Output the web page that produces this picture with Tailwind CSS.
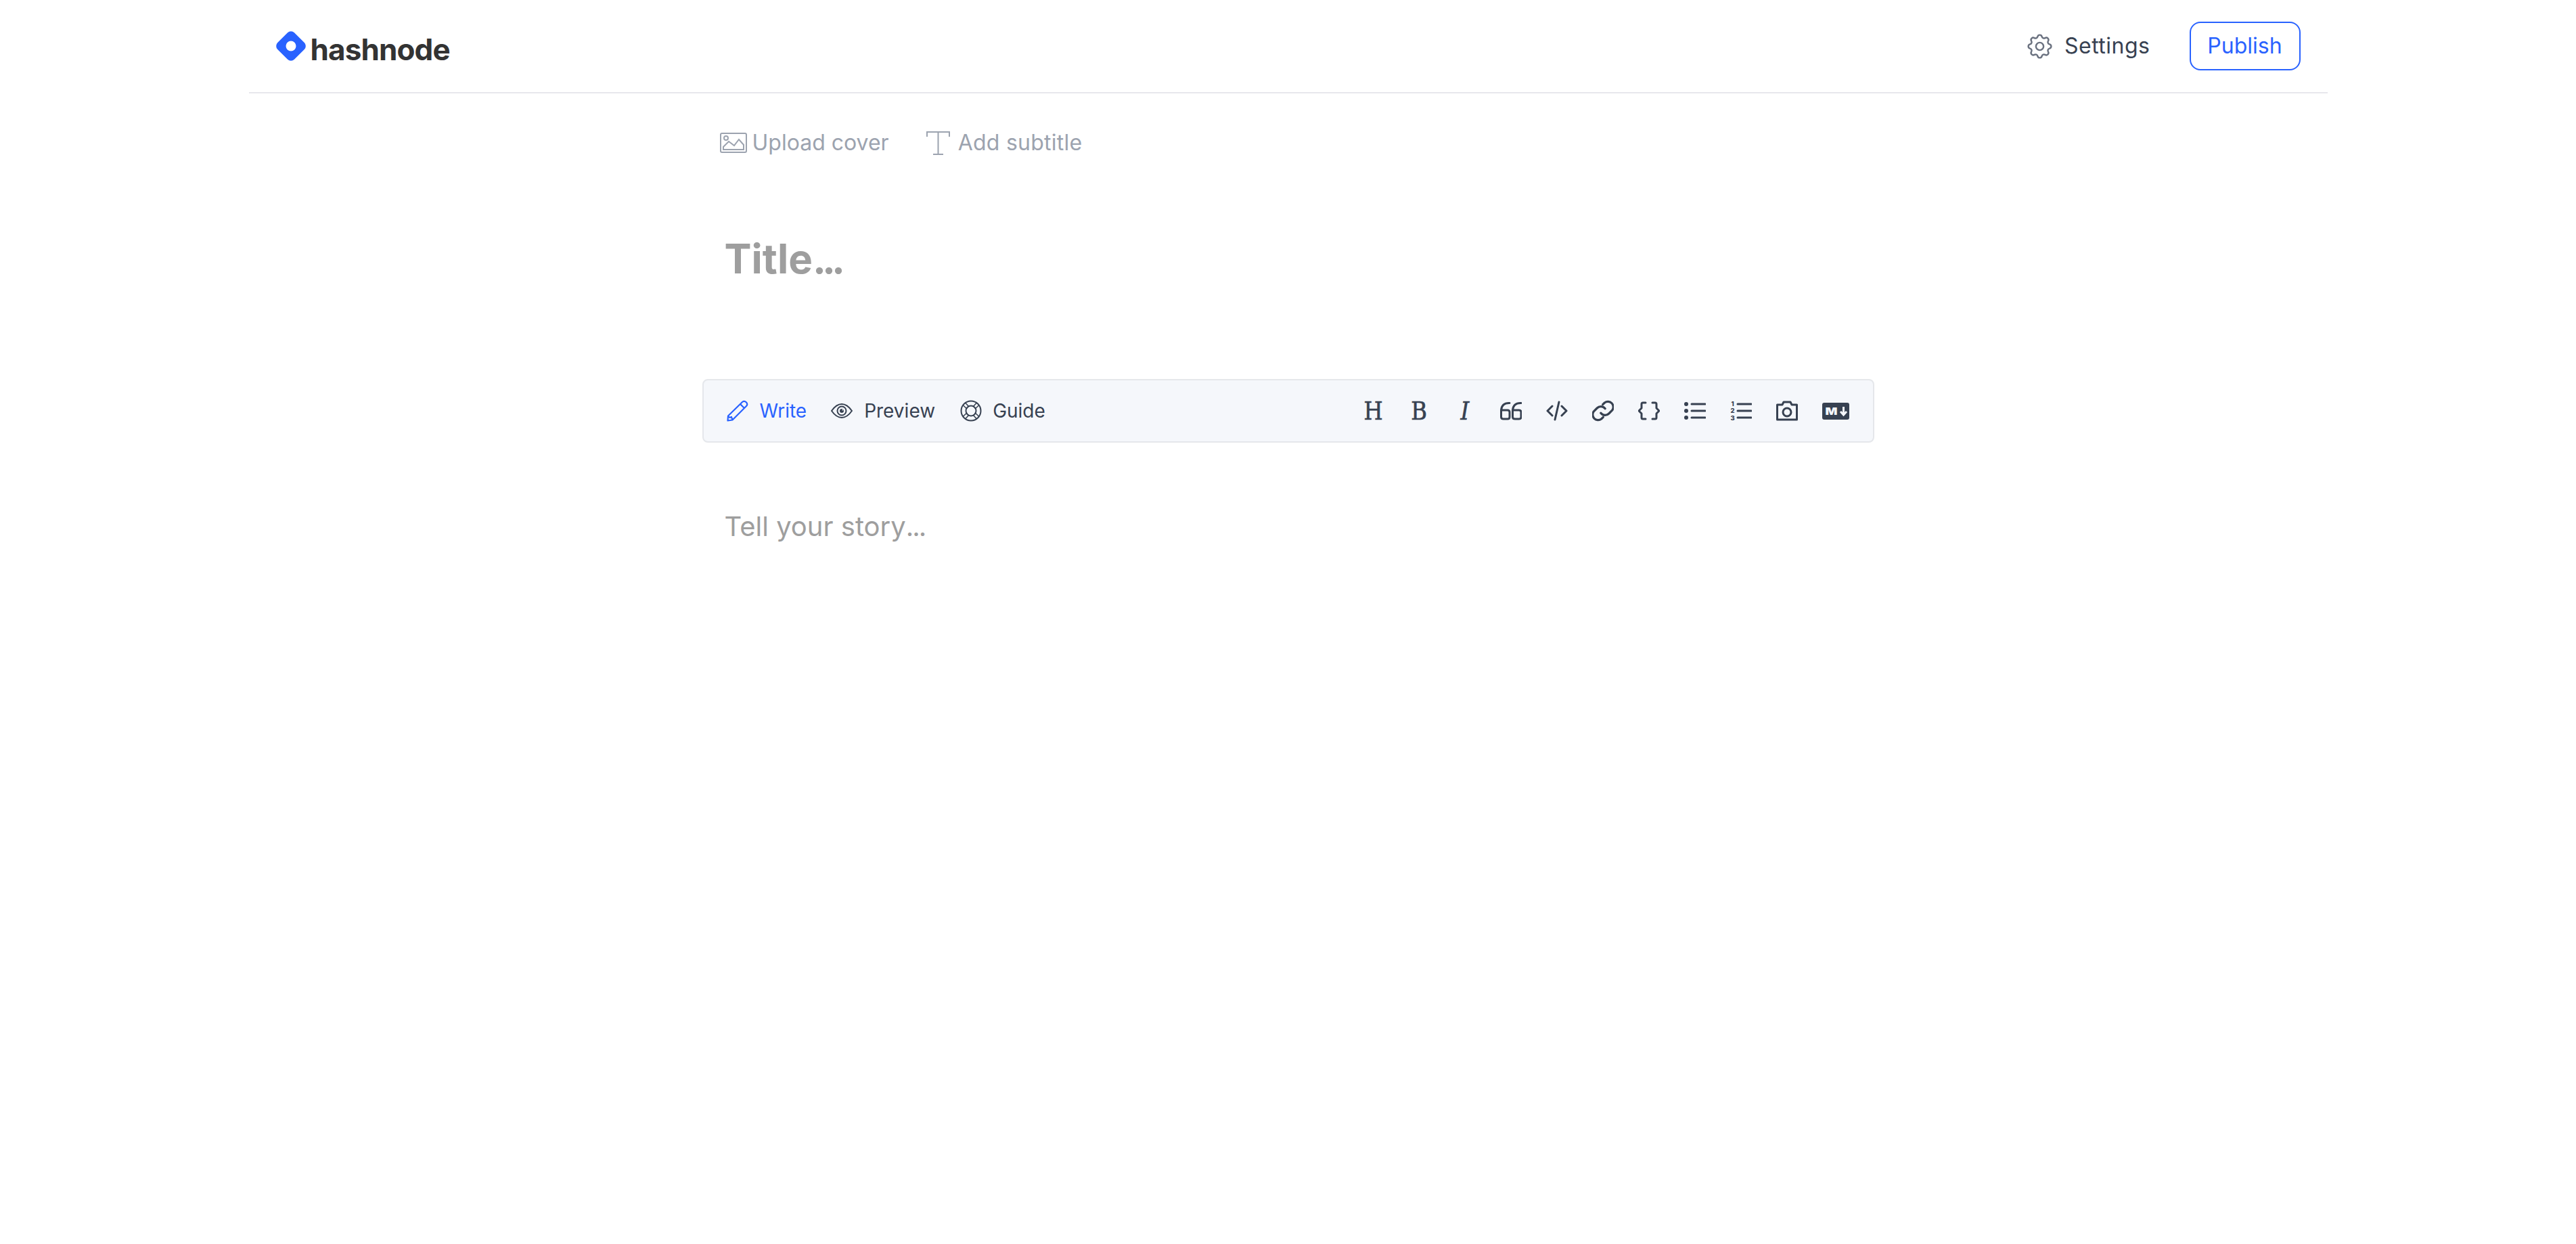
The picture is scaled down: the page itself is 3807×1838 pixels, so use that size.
<!DOCTYPE html>
<html lang="en">
<head>
    <meta charset="UTF-8"/>
    <title>hashnode editor</title>
    <script src="https://cdn.jsdelivr.net/npm/@tailwindcss/browser@4"></script>
</head>
<body class="bg-white font-[Inter,sans-serif] min-h-screen">
<div class="max-w-[3072px] mx-auto">
    <!-- Header -->
    <header class="h-[138px] border-b-2 border-[#e7e7ec] px-10 flex items-center justify-between">
        <div class="flex items-center gap-[7px]">
            <svg width="44" height="44" viewBox="0 0 44 44">
                <rect x="4.5" y="4.5" width="35" height="35" rx="7" fill="#2962ff" transform="rotate(45 22 22)"/>
                <circle cx="22" cy="22" r="7.5" fill="#fff"/>
            </svg>
            <span class="text-[44px] leading-none font-bold tracking-[-0.02em] text-[#333333] mt-[10px]">hashnode</span>
        </div>
        <div class="flex items-center gap-[58px]">
            <div class="flex items-center gap-[14px]">
                <svg width="45" height="45" viewBox="0 0 24 24" fill="none" stroke="#6b7280" stroke-width="1.3" stroke-linejoin="round">
                    <path d="M10.325 3.317c.426-1.756 2.924-1.756 3.35 0a1.724 1.724 0 002.573 1.066c1.543-.94 3.31.826 2.37 2.37a1.724 1.724 0 001.065 2.572c1.756.426 1.756 2.924 0 3.35a1.724 1.724 0 00-1.066 2.573c.94 1.543-.826 3.31-2.37 2.37a1.724 1.724 0 00-2.572 1.065c-.426 1.756-2.924 1.756-3.35 0a1.724 1.724 0 00-2.573-1.066c-1.543.94-3.31-.826-2.37-2.37a1.724 1.724 0 00-1.065-2.572c-1.756-.426-1.756-2.924 0-3.35a1.724 1.724 0 001.066-2.573c-.94-1.543.826-3.31 2.37-2.37.996.608 2.296.07 2.572-1.065z" transform="translate(0 1)"/>
                    <circle cx="12" cy="12" r="3"/>
                </svg>
                <span class="text-[32px] tracking-[0.5px] text-[#374151]">Settings</span>
            </div>
            <button class="w-[164px] h-[72px] rounded-[16px] border-2 border-[#2962ff] text-[32px] text-[#2962ff]">Publish</button>
        </div>
    </header>

    <!-- Editor column -->
    <main class="w-[1732px] mx-auto">
        <div class="pt-[52px] pl-[26px] flex items-center h-[94px] text-[32px] text-[#9ca3af]">
            <svg width="40" height="30" viewBox="0 0 40 30" fill="none" stroke="#9ca3af" stroke-width="2">
                <rect x="1" y="1" width="38" height="28" rx="2"/>
                <circle cx="9" cy="8" r="3"/>
                <path d="M5 25 V21 L13 13 L21 19 L28 10 L35 18 V25 Z"/>
            </svg>
            <span class="ml-[8px]">Upload cover</span>
            <svg class="ml-[55px]" width="35" height="35" viewBox="0 0 35 35" fill="none" stroke="#9ca3af" stroke-width="2">
                <path d="M1 8 V1 H34 V8 M17.5 1 V34 M10 34 H25"/>
            </svg>
            <span class="ml-[12px] tracking-[0.25px]">Add subtitle</span>
        </div>

        <h1 class="mt-[105px] pl-[33px] text-[60px] leading-[90px] font-bold text-[#9e9e9e]">Title<span class="tracking-[-6px]">...</span></h1>

        <!-- Toolbar -->
        <div class="mt-[133px] h-[94px] rounded-[8px] border-2 border-[#e5e7eb] bg-[#f5f7fb] pl-[34px] pr-[35px] flex items-center justify-between">
            <div class="flex items-center text-[28px] text-[#374151]">
                <svg width="32" height="32" viewBox="0 0 32 32" fill="none" stroke="#2962ff" stroke-width="2.2" stroke-linejoin="round">
                    <path d="M1.5 30.5 L2 23.5 L23 3 Q26 0.5 29 3.5 Q31.5 6.5 29 9 L8.5 29.5 Z M20 6 L26 12 M2 24 L4.5 26 L7 25 L8.5 29.5"/>
                </svg>
                <span class="ml-[17px] text-[#2962ff]">Write</span>
                <svg class="ml-[36px]" width="32" height="22" viewBox="0 0 32 22" fill="none" stroke="#374151" stroke-width="2">
                    <path d="M1 11 Q8 1 16 1 Q24 1 31 11 Q24 21 16 21 Q8 21 1 11 Z"/>
                    <circle cx="16" cy="11" r="6.5"/>
                    <circle cx="16" cy="11" r="3" fill="#374151" stroke="none"/>
                    <circle cx="17.5" cy="9.5" r="1" fill="#f5f7fb" stroke="none"/>
                </svg>
                <span class="ml-[17px]">Preview</span>
                <svg class="ml-[37px]" width="32" height="32" viewBox="0 0 32 32" fill="none" stroke="#374151" stroke-width="2">
                    <circle cx="16" cy="16" r="14.5"/>
                    <circle cx="16" cy="16" r="7.5"/>
                    <path d="M4.5 8 L10 13 M8 4.5 L13 10 M27.5 8 L22 13 M24 4.5 L19 10 M4.5 24 L10 19 M8 27.5 L13 22 M27.5 24 L22 19 M24 27.5 L19 22" stroke-width="1.6"/>
                </svg>
                <span class="ml-[16px]">Guide</span>
            </div>
            <div class="flex items-center gap-[36px] text-[#374151]">
                <span class="w-[32px] text-center font-['DejaVu_Serif'] text-[38px] leading-[32px] scale-x-[.85] [-webkit-text-stroke:0.7px_#374151]">H</span>
                <span class="w-[32px] text-center font-['DejaVu_Serif'] text-[38px] leading-[32px] scale-x-[.85] [-webkit-text-stroke:0.7px_#374151]">B</span>
                <span class="w-[32px] text-center font-['DejaVu_Serif'] italic text-[38px] leading-[32px] scale-x-[.85] [-webkit-text-stroke:0.7px_#374151]">I</span>
                <svg width="32" height="32" viewBox="0 0 32 32" fill="none" stroke="#374151" stroke-width="3" stroke-linecap="round" stroke-linejoin="round">
                    <path d="M14 4.5 Q2.5 4 1.5 15 V25 Q1.5 28 5 28 H11 Q14 28 14 25 V18 Q14 15 11 15 H2"/>
                    <path d="M31 4.5 Q19.5 4 18.5 15 V25 Q18.5 28 22 28 H28 Q31 28 31 25 V18 Q31 15 28 15 H19"/>
                </svg>
                <svg width="32" height="32" viewBox="0 0 32 32" fill="none" stroke="#374151" stroke-width="3" stroke-linecap="round" stroke-linejoin="round">
                    <path d="M9 9 L2 16 L9 23 M23 9 L30 16 L23 23 M19 3 L13 29"/>
                </svg>
                <svg width="32" height="32" viewBox="2 2 20 20" fill="none" stroke="#374151" stroke-width="2" stroke-linecap="round" stroke-linejoin="round">
                    <path d="M10 14 a5 5 0 0 0 7.5 .5 l3 -3 a5 5 0 0 0 -7 -7 l-1.7 1.7"/>
                    <path d="M14 10 a5 5 0 0 0 -7.5 -.5 l-3 3 a5 5 0 0 0 7 7 l1.7 -1.7"/>
                </svg>
                <svg width="32" height="32" viewBox="0 0 32 32" fill="none" stroke="#374151" stroke-width="3" stroke-linecap="round" stroke-linejoin="round">
                    <path d="M11 4 H7 Q5 4 5 6 V12 L1 16 L5 20 V26 Q5 28 7 28 H11"/>
                    <path d="M21 4 H25 Q27 4 27 6 V12 L31 16 L27 20 V26 Q27 28 25 28 H21"/>
                </svg>
                <svg width="32" height="32" viewBox="0 0 32 32" fill="none" stroke="#374151" stroke-width="3" stroke-linecap="round">
                    <path d="M11 6 H31 M11 16 H31 M11 26 H31"/>
                    <circle cx="3" cy="6" r="3" fill="#374151" stroke="none"/>
                    <circle cx="3" cy="16" r="3" fill="#374151" stroke="none"/>
                    <circle cx="3" cy="26" r="3" fill="#374151" stroke="none"/>
                </svg>
                <svg width="32" height="32" viewBox="0 0 32 32" fill="none" stroke="#374151" stroke-width="3" stroke-linecap="round">
                    <path d="M11 6 H31 M11 16 H31 M11 26 H31"/>
                    <text x="3.5" y="9" fill="#374151" stroke="none" font-size="9.5" font-weight="800" text-anchor="middle">1</text>
                    <text x="3.5" y="19" fill="#374151" stroke="none" font-size="9.5" font-weight="800" text-anchor="middle">2</text>
                    <text x="3.5" y="30" fill="#374151" stroke="none" font-size="9.5" font-weight="800" text-anchor="middle">3</text>
                </svg>
                <svg width="32" height="32" viewBox="0 0 32 32" fill="none" stroke="#374151" stroke-width="3" stroke-linejoin="round">
                    <path d="M1.5 7 H9 L11 3 H21 L23 7 H30.5 V29 H1.5 Z"/>
                    <circle cx="16" cy="18" r="6"/>
                </svg>
                <svg width="40" height="25" viewBox="0 0 40 25">
                    <rect width="40" height="25" rx="3" fill="#374151"/>
                    <text x="4.5" y="18" fill="#f5f7fb" font-size="15" font-weight="900" textLength="18" lengthAdjust="spacingAndGlyphs">M</text>
                    <path d="M31.5 6 V17 M27 13 L31.5 18 L36 13" fill="none" stroke="#f5f7fb" stroke-width="3"/>
                </svg>
            </div>
        </div>

        <p class="mt-[94px] pl-[33px] text-[40px] leading-[60px] text-[#9e9e9e]">Tell your story<span class="tracking-[-2px]">...</span></p>
    </main>
</div>
</body>
</html>
